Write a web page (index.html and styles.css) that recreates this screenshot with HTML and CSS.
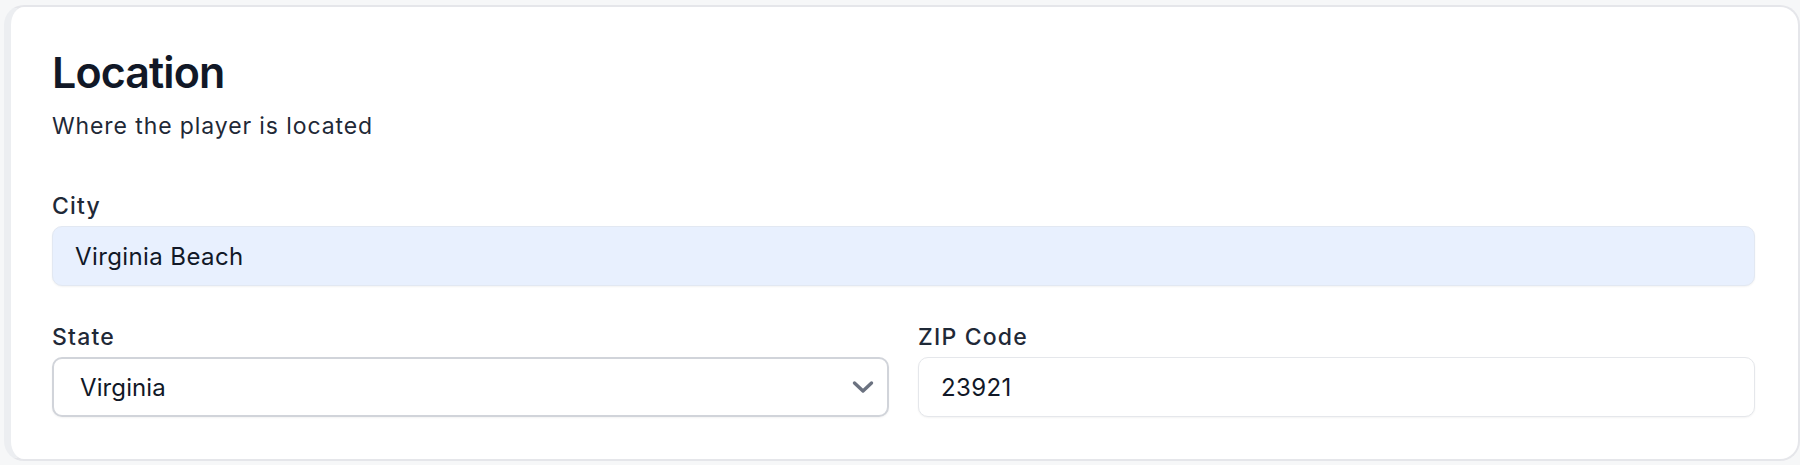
FILE: index.html
```html
<!DOCTYPE html>
<html lang="en">
<head>
<meta charset="utf-8">
<title>Location</title>
<link rel="stylesheet" href="styles.css">
</head>
<body>
<div class="card">
  <div class="card-header">
    <h2 class="title">Location</h2>
    <p class="subtitle">Where the player is located</p>
  </div>
  <div class="field field-city">
    <label class="label" for="city">City</label>
    <input class="input input-autofill" id="city" type="text" value="Virginia Beach">
  </div>
  <div class="row">
    <div class="field">
      <label class="label" for="state">State</label>
      <div class="select-wrap">
        <select class="select" id="state">
          <option>Virginia</option>
        </select>
        <svg class="chevron" width="22" height="14" viewBox="0 0 22 14" aria-hidden="true">
          <path d="M2.5 3 L11 11 L19.5 3" fill="none" stroke="#6b7280" stroke-width="3.4" stroke-linecap="round" stroke-linejoin="round"/>
        </svg>
      </div>
    </div>
    <div class="field">
      <label class="label" for="zip">ZIP Code</label>
      <input class="input" id="zip" type="text" value="23921">
    </div>
  </div>
</div>
</body>
</html>
```
FILE: styles.css
```css
* { box-sizing: border-box; }
html, body { margin: 0; padding: 0; }
body {
  background: #f6f7f8;
  font-family: Inter, "Noto Sans", "Liberation Sans", sans-serif;
  width: 1800px;
  height: 465px;
  overflow: hidden;
  padding: 5px 0 0 4px;
}
.card {
  width: 1796px;
  background: #ffffff;
  border: 2px solid #e5e6ea;
  border-left: 7px solid #eceef1;
  border-radius: 20px;
  padding: 39px 43px 42px 41px;
}
.title {
  margin: 0;
  font-size: 43px;
  line-height: 52px;
  font-weight: 600;
  letter-spacing: -0.9px;
  color: #111827;
}
.subtitle {
  margin: 13px 0 0;
  font-size: 23px;
  line-height: 30px;
  letter-spacing: 0.9px;
  color: #1f2937;
}
.field { display: flex; flex-direction: column; min-width: 0; }
.field-city { margin-top: 50px; }
.label {
  font-size: 23px;
  line-height: 30px;
  font-weight: 450;
  letter-spacing: 1.2px;
  color: #1f2937;
  margin-bottom: 5px;
}
.input, .select {
  height: 60px;
  width: 100%;
  border: 1px solid #e5e7eb;
  border-radius: 10px;
  background: #ffffff;
  box-shadow: 0 1px 2px rgba(0, 0, 0, 0.05);
  font-family: inherit;
  font-size: 24px;
  letter-spacing: 0.4px;
  color: #111827;
  padding: 0 22px;
  outline: none;
}
.input-autofill { background: #e8f0fe; border-color: #e2e8f2; }
.row {
  margin-top: 36px;
  display: grid;
  grid-template-columns: 1fr 1fr;
  column-gap: 29px;
}
.select-wrap { position: relative; }
.select {
  appearance: none;
  -webkit-appearance: none;
  border: 2px solid #d1d4da;
  padding: 0 26px;
  letter-spacing: 0.1px;
}
.chevron {
  position: absolute;
  right: 15px;
  top: 23px;
  pointer-events: none;
}
```
